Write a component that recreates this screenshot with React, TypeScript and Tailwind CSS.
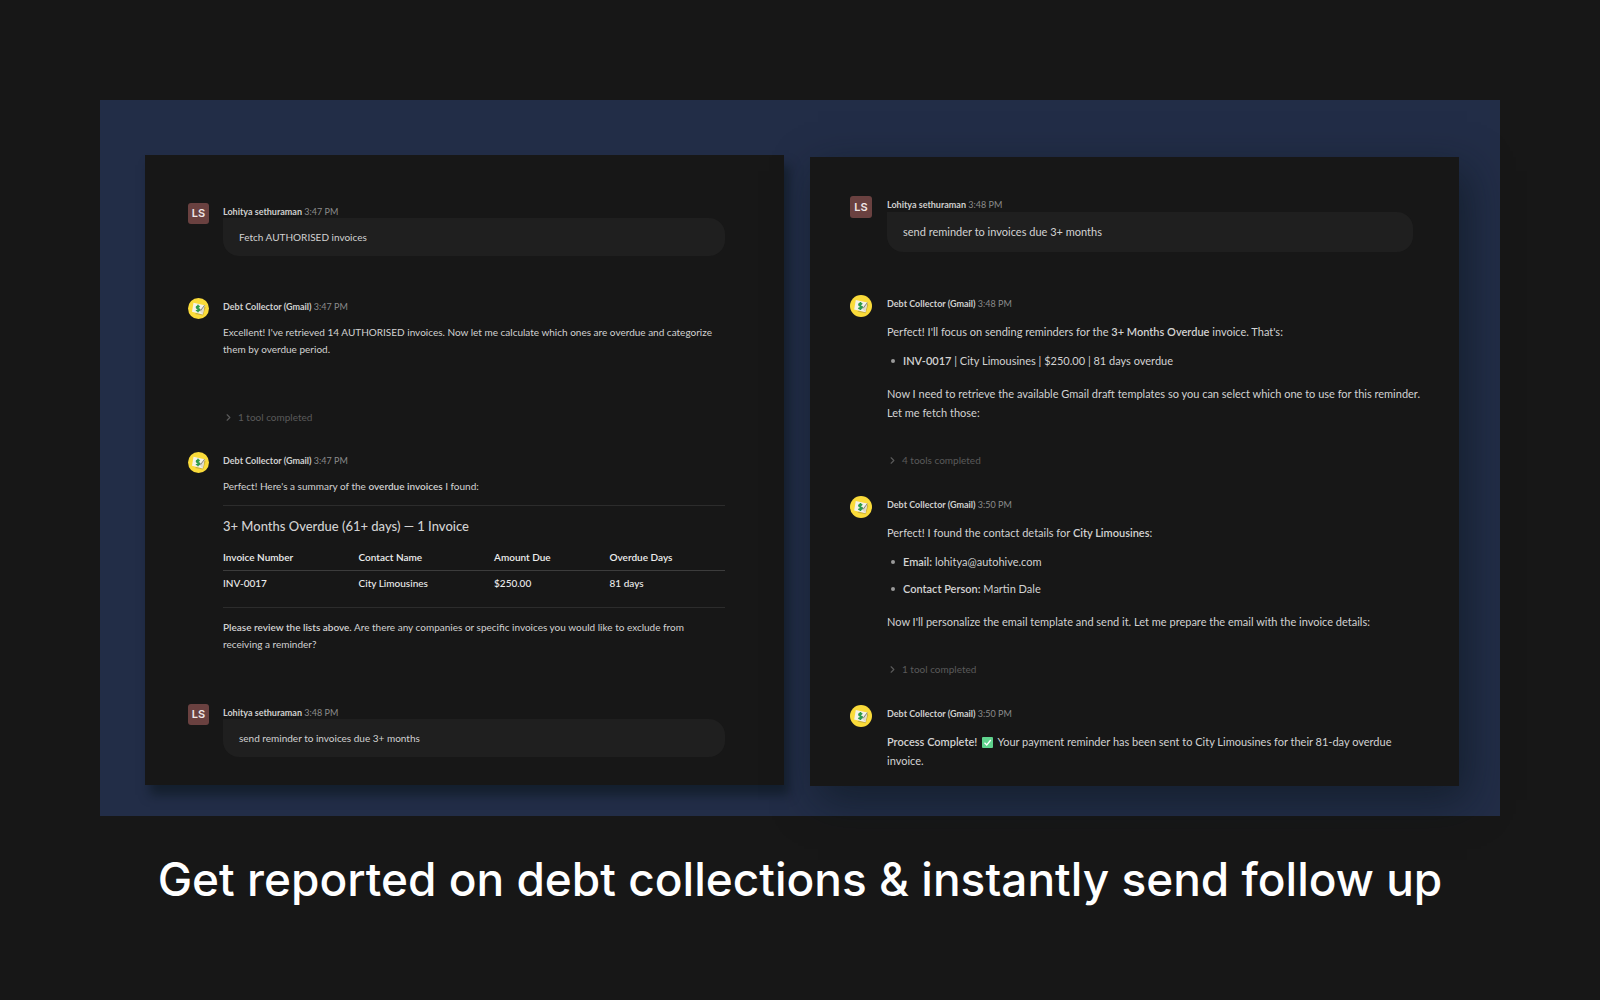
import type { ReactNode } from 'react';
import clsx from 'clsx';
import { ChevronRight } from 'lucide-react';

type Size = 'sm' | 'md';

function UserAvatar({ size }: { size: Size }) {
  return (
    <div
      className={clsx(
        'shrink-0 rounded-[3px] bg-[#6a4140] text-center font-[Inter,sans-serif] text-[11px] font-semibold text-[#f0e6e6]',
        size === 'sm' ? 'h-[21px] w-[21px] leading-[21px]' : 'h-[22px] w-[22px] leading-[22px]',
      )}
    >
      LS
    </div>
  );
}

// Yellow disc with an envelope and a green dollar sign
function BotAvatar({ size }: { size: Size }) {
  return (
    <svg viewBox="0 0 42 42" className={clsx('shrink-0', size === 'sm' ? 'h-[21px] w-[21px]' : 'h-[22px] w-[22px]')}>
      <circle cx="21" cy="21" r="21" fill="#fadb3a" />
      <path d="M14 32 L30 35 L35 19 L32 14 Z" fill="#cdb23c" />
      <path d="M11 9.500 L33 14.500 L29.500 33 L8 27.500 Z" fill="#f4f2e8" />
      <path d="M33 14.500 L29.500 33 L22 25 Z" fill="#dedbcd" />
      <path d="M33 14.500 L25.500 25 L22.500 21" fill="none" stroke="#85847a" strokeWidth="1.800" />
      <path
        d="M23.500 17.500 C20.500 15.500 16.500 16.500 17 19 C17.500 21.500 23 20.500 23 23.500 C23 26 18.500 26.500 16 24.500 M20 13.500 V28.500"
        fill="none"
        stroke="#2d9a4a"
        strokeWidth="3.200"
      />
    </svg>
  );
}

function CheckMark() {
  return (
    <svg viewBox="0 0 22 22" className="mx-[2px] inline-block h-[11px] w-[11px] align-[-2px]" role="img" aria-label="Done">
      <rect width="22" height="22" rx="2" fill="#5fd38d" />
      <path d="M5 11.500 L9.500 16 L17.500 6" fill="none" stroke="#fff" strokeWidth="2.600" />
    </svg>
  );
}

interface MessageProps {
  size: Size;
  time: string;
  from: 'user' | 'bot';
  className?: string;
  children: ReactNode;
}

function Message({ size, time, from, className, children }: MessageProps) {
  return (
    <article className={clsx('flex', size === 'sm' ? 'gap-[14px]' : 'gap-[15px]', className)}>
      {from === 'user' ? <UserAvatar size={size} /> : <BotAvatar size={size} />}
      <div className="min-w-0 flex-1 pt-[2px]">
        <header className={clsx('text-[9px] text-[#8b8b8b]', size === 'sm' ? 'leading-[13px]' : 'leading-[14px]')}>
          <span className="font-bold text-[#cfcfcf]">
            {from === 'user' ? 'Lohitya sethuraman' : 'Debt Collector (Gmail)'}
          </span>{' '}
          <time>{time}</time>
        </header>
        {children}
      </div>
    </article>
  );
}

function Bubble({ className, children }: { className?: string; children: ReactNode }) {
  return (
    <p className={clsx('rounded-2xl rounded-tl-none bg-[#1f1f1f] px-4 py-[10px]', className)}>{children}</p>
  );
}

function ToolStatus({ className, children }: { className?: string; children: ReactNode }) {
  return (
    <button
      type="button"
      className={clsx('flex items-center gap-1 text-[10px] leading-4 text-[#5a5a5a]', className)}
    >
      <ChevronRight className="h-[11px] w-[11px]" strokeWidth={2.5} />
      {children}
    </button>
  );
}

function B({ children }: { children: ReactNode }) {
  return <strong className="font-semibold">{children}</strong>;
}

function Bullets({ items, className }: { items: ReactNode[]; className?: string }) {
  return (
    <ul className={clsx('flex flex-col gap-2', className)}>
      {items.map((item, i) => (
        <li key={i} className="flex items-center gap-2">
          <span className="ml-1 h-1 w-1 rounded-full bg-[#9a9a9a]" />
          <span>{item}</span>
        </li>
      ))}
    </ul>
  );
}

const invoiceColumns = [
  { label: 'Invoice Number', value: 'INV-0017', width: 'w-[27%]' },
  { label: 'Contact Name', value: 'City Limousines', width: 'w-[27%]' },
  { label: 'Amount Due', value: '$250.00', width: 'w-[23%]' },
  { label: 'Overdue Days', value: '81 days', width: 'w-[23%]' },
];

function InvoiceTable() {
  return (
    <table className="mt-[9px] w-full table-fixed text-left leading-4 text-[#ececec]">
      <thead>
        <tr className="border-b border-[#3c3c3c]">
          {invoiceColumns.map((c) => (
            <th key={c.label} className={clsx('pt-1 pb-[5px] font-semibold', c.width)}>
              {c.label}
            </th>
          ))}
        </tr>
      </thead>
      <tbody>
        <tr>
          {invoiceColumns.map((c) => (
            <td key={c.label} className="pt-1 pb-px font-medium">
              {c.value}
            </td>
          ))}
        </tr>
      </tbody>
    </table>
  );
}

function OverduePanel() {
  return (
    <section className="bg-[#171717] pt-12 pr-[59px] pb-7 pl-[43px] text-[10px] leading-[17px] text-[#d2d2d2] shadow-[5px_10px_10px_rgba(10,20,25,0.55)]">
      <Message size="sm" from="user" time="3:47 PM">
        <Bubble className="leading-[18px]">Fetch AUTHORISED invoices</Bubble>
      </Message>

      <Message size="sm" from="bot" time="3:47 PM" className="mt-[42px]">
        <p className="mt-[11px]">
          Excellent! I've retrieved 14 AUTHORISED invoices. Now let me calculate which ones are overdue and categorize
          <br />
          them by overdue period.
        </p>
        <ToolStatus className="mt-[51px]">1 tool completed</ToolStatus>
      </Message>

      <Message size="sm" from="bot" time="3:47 PM" className="mt-[27px]">
        <p className="mt-[11px]">
          Perfect! Here's a summary of the <B>overdue invoices</B> I found:
        </p>
        <hr className="mt-[10px] border-[#2c2c2c]" />
        <h2 className="mt-[10px] text-[13px] leading-5 font-medium">3+ Months Overdue (61+ days) — 1 Invoice</h2>
        <InvoiceTable />
        <hr className="mt-[15px] border-[#2c2c2c]" />
        <p className="mt-[11px]">
          <B>Please review the lists above.</B> Are there any companies or specific invoices you would like to exclude
          from
          <br />
          receiving a reminder?
        </p>
      </Message>

      <Message size="sm" from="user" time="3:48 PM" className="mt-[51px]">
        <Bubble className="leading-[18px]">send reminder to invoices due 3+ months</Bubble>
      </Message>
    </section>
  );
}

function ReminderPanel() {
  return (
    <section className="mt-[2px] bg-[#171717] pt-[39px] pr-8 pb-4 pl-10 text-[11px] leading-[19px] text-[#d2d2d2] shadow-[8px_14px_40px_rgba(10,20,25,0.55)]">
      <Message size="md" from="user" time="3:48 PM">
        <Bubble className="mr-[14px] leading-5">send reminder to invoices due 3+ months</Bubble>
      </Message>

      <Message size="md" from="bot" time="3:48 PM" className="mt-[43px]">
        <p className="mt-[11px]">
          Perfect! I'll focus on sending reminders for the <B>3+ Months Overdue</B> invoice. That's:
        </p>
        <Bullets
          className="mt-[10px]"
          items={[
            <>
              <B>INV-0017</B> | City Limousines | $250.00 | 81 days overdue
            </>,
          ]}
        />
        <p className="mt-[14px]">
          Now I need to retrieve the available Gmail draft templates so you can select which one to use for this
          reminder.
          <br />
          Let me fetch those:
        </p>
        <ToolStatus className="mt-[30px]">4 tools completed</ToolStatus>
      </Message>

      <Message size="md" from="bot" time="3:50 PM" className="mt-7">
        <p className="mt-[11px]">
          Perfect! I found the contact details for <B>City Limousines</B>:
        </p>
        <Bullets
          className="mt-[10px]"
          items={[
            <>
              <B>Email:</B> lohitya@autohive.com
            </>,
            <>
              <B>Contact Person:</B> Martin Dale
            </>,
          ]}
        />
        <p className="mt-[14px]">
          Now I'll personalize the email template and send it. Let me prepare the email with the invoice details:
        </p>
        <ToolStatus className="mt-[30px]">1 tool completed</ToolStatus>
      </Message>

      <Message size="md" from="bot" time="3:50 PM" className="mt-7">
        <p className="mt-[11px]">
          <B>Process Complete!</B> <CheckMark /> Your payment reminder has been sent to City Limousines for their 81-day
          overdue
          <br />
          invoice.
        </p>
      </Message>
    </section>
  );
}

export default function App() {
  return (
    <main className="min-h-screen bg-[#171717] px-[100px] pt-[100px] font-[Lato,sans-serif]">
      <div className="grid grid-cols-[639fr_649fr] items-start gap-[26px] bg-[#222d47] pt-[55px] pr-[41px] pb-[30px] pl-[45px]">
        <OverduePanel />
        <ReminderPanel />
      </div>
      <h1 className="mt-[35px] text-center font-[Inter,sans-serif] text-[46px] leading-[56px] font-medium text-white">
        Get reported on debt collections &amp; instantly send follow up
      </h1>
    </main>
  );
}
